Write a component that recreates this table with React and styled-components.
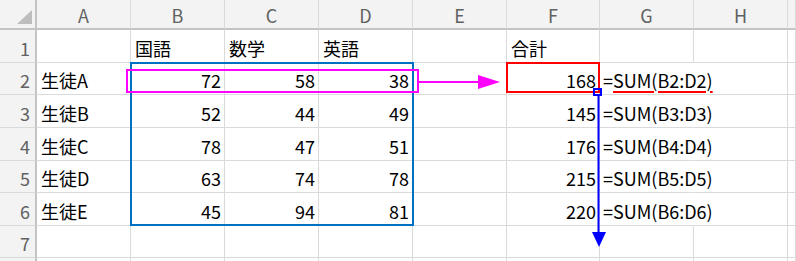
import React from 'react';
import styled, { createGlobalStyle } from 'styled-components';

const GlobalStyle = createGlobalStyle`
  html, body {
    margin: 0;
    padding: 0;
    background: #fff;
  }
  body {
    font-family: "Noto Sans CJK JP", "Noto Sans", sans-serif;
  }
`;

// column widths: row header, A..H (the rest goes to the next, unlabelled column)
const COL_WIDTHS = [37, 94, 94, 94, 94, 94, 93, 94, 94];
// row heights: column header, rows 1..7 (row 8 is cut off)
const ROW_HEIGHTS = [30, 33, 32, 33, 33, 32, 33, 32];
const LETTERS = ['A', 'B', 'C', 'D', 'E', 'F', 'G', 'H', ''];

const students = [
  { name: '生徒A', scores: [72, 58, 38] },
  { name: '生徒B', scores: [52, 44, 49] },
  { name: '生徒C', scores: [78, 47, 51] },
  { name: '生徒D', scores: [63, 74, 78] },
  { name: '生徒E', scores: [45, 94, 81] },
];

const Sheet = styled.div`
  position: relative;
  width: 796px;
  height: 261px;
  overflow: hidden;
`;

const Grid = styled.div`
  display: grid;
  grid-template-columns: ${COL_WIDTHS.map((w) => `${w}px`).join(' ')} 1fr;
  grid-template-rows: ${ROW_HEIGHTS.map((h) => `${h}px`).join(' ')} 32px;
  font-size: 18px;
  line-height: 26px;
`;

const Corner = styled.div`
  box-sizing: border-box;
  display: flex;
  justify-content: flex-end;
  align-items: flex-end;
  padding: 0 3px 4px 0;
  background: #f3f3f3;
  border-right: 2px solid #c4c4c4;
  border-bottom: 2px solid #c4c4c4;
`;

const CornerMark = styled.div`
  width: 15px;
  height: 14px;
  background: #bdbdbd;
  clip-path: polygon(100% 0, 100% 100%, 0 100%);
`;

const ColHead = styled.div`
  box-sizing: border-box;
  display: flex;
  justify-content: center;
  align-items: center;
  padding-top: 2px;
  background: #f3f3f3;
  border-right: 1px solid #dadada;
  border-bottom: 2px solid #c4c4c4;
  color: #616161;
`;

const RowHead = styled.div`
  box-sizing: border-box;
  display: flex;
  justify-content: flex-end;
  align-items: flex-end;
  padding: 0 5px 1px 0;
  background: #f3f3f3;
  border-right: 2px solid #c4c4c4;
  border-bottom: 1px solid #dadada;
  color: #616161;
  overflow: hidden;
`;

const Cell = styled.div`
  box-sizing: border-box;
  min-width: 0;
  display: flex;
  align-items: flex-end;
  justify-content: ${(p) => (p.$num ? 'flex-end' : 'flex-start')};
  padding: ${(p) => (p.$num ? '0 3px 1px 0' : `0 0 1px ${p.$spill ? 3 : 4}px`)};
  border-right: 1px solid ${(p) => (p.$spill ? 'transparent' : '#dadada')};
  border-bottom: 1px solid #dadada;
  color: #000;
  white-space: nowrap;
  overflow: ${(p) => (p.$spill ? 'visible' : 'hidden')};
`;

const Marked = styled.span`
  text-decoration: underline;
  text-decoration-color: #ff0000;
  text-decoration-thickness: 2px;
  text-underline-offset: 3px;
`;

// hand-drawn annotations on top of the grid
const Frame = styled.div`
  position: absolute;
  box-sizing: border-box;
  left: ${(p) => p.$x}px;
  top: ${(p) => p.$y}px;
  width: ${(p) => p.$w}px;
  height: ${(p) => p.$h}px;
  border: 2px solid ${(p) => p.$color};
  pointer-events: none;
`;

const Arrows = styled.svg`
  position: absolute;
  left: 0;
  top: 0;
  pointer-events: none;
`;

function rowCells(r) {
  // r: 1-based sheet row
  const cells = Array(9).fill(null);
  if (r === 1) {
    cells[1] = '国語';
    cells[2] = '数学';
    cells[3] = '英語';
    cells[5] = '合計';
    return cells.map((v, i) => <Cell key={i}>{v}</Cell>);
  }
  const s = students[r - 2];
  if (!s) return cells.map((v, i) => <Cell key={i} />);
  const total = s.scores.reduce((a, b) => a + b, 0);
  return [
    <Cell key="a">{s.name}</Cell>,
    ...s.scores.map((n, i) => (
      <Cell key={`s${i}`} $num>
        {n}
      </Cell>
    )),
    <Cell key="e" />,
    <Cell key="f" $num>
      {total}
    </Cell>,
    <Cell key="g" $spill>
      =
      {r === 2 ? <Marked>SUM(B2:D2)</Marked> : `SUM(B${r}:D${r})`}
    </Cell>,
    <Cell key="h" />,
    <Cell key="i" />,
  ];
}

export default function App() {
  const rows = [1, 2, 3, 4, 5, 6, 7, 8];
  return (
    <>
      <GlobalStyle />
      <Sheet>
        <Grid>
          <Corner>
            <CornerMark />
          </Corner>
          {LETTERS.map((l, i) => (
            <ColHead key={i}>{l}</ColHead>
          ))}
          {rows.map((r) => (
            <React.Fragment key={r}>
              <RowHead>{r < 8 ? r : null}</RowHead>
              {rowCells(r)}
            </React.Fragment>
          ))}
        </Grid>

        <Frame $x={130} $y={62} $w={284} $h={164} $color="#0070c0" />
        <Frame $x={126} $y={69} $w={293} $h={24} $color="#ff00ff" />
        <Frame $x={506} $y={62} $w={94} $h={31} $color="#ff0000" />
        <Frame $x={593} $y={88} $w={9} $h={8} $color="#0000ff" />

        <Arrows width="796" height="261" viewBox="0 0 796 261">
          <line x1="419" y1="82" x2="480" y2="82" stroke="#ff00ff" strokeWidth="2" />
          <polygon points="478,75 500,82 478,89" fill="#ff00ff" />
          <line x1="598.5" y1="96" x2="598.5" y2="234" stroke="#0000ff" strokeWidth="2" />
          <polygon points="592,232 606,232 599,247" fill="#0000ff" />
        </Arrows>
      </Sheet>
    </>
  );
}
